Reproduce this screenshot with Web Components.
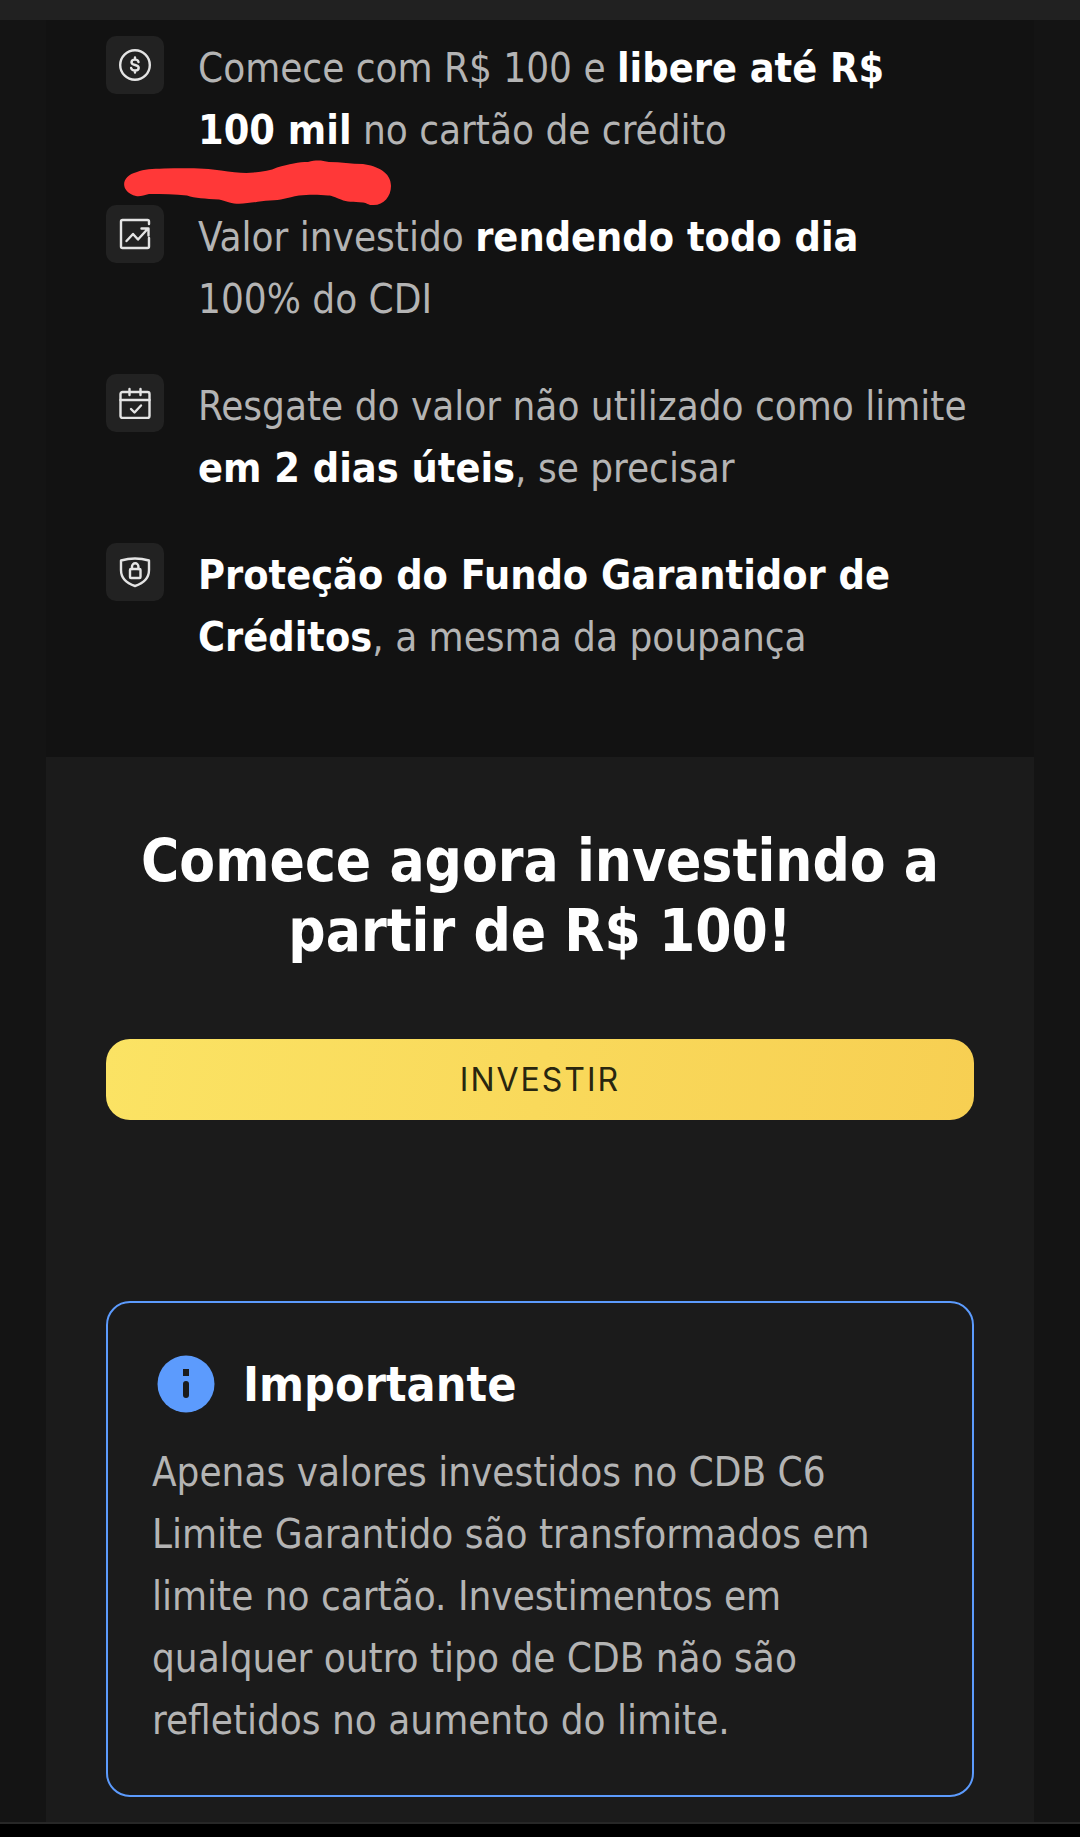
<!DOCTYPE html>
<html lang="pt-BR">
<head>
<meta charset="UTF-8">
<meta name="viewport" content="width=device-width, initial-scale=1">
<title>CDB C6 Limite Garantido</title>
<style>
    :root {
        --page-bg: #141414;
        --section-bg: #121212;
        --panel-bg: #1b1b1b;
        --text: #b4b4b4;
        --strong: #fff;
        --info: #5c9bfd;
    }
    body {
        margin: 0;
        background: #000;
        color: var(--text);
        font-family: "DejaVu Sans Condensed", "DejaVu Sans", sans-serif;
        font-size: 40px;
        line-height: 62px;
    }
    b {
        color: var(--strong);
        font-size: 41px;
        line-height: 1;
    }
</style>
</head>
<body>

<invest-page>
    <benefit-list>
        <benefit-item icon="coin" marked>Comece com R$ 100 e <b>libere até R$ 100&nbsp;mil</b> no cartão de crédito</benefit-item>
        <benefit-item icon="chart">Valor investido <b>rendendo todo dia</b> 100%&nbsp;do CDI</benefit-item>
        <benefit-item icon="calendar">Resgate do valor não utilizado como limite <b>em 2 dias úteis</b>, se precisar</benefit-item>
        <benefit-item icon="shield"><b>Proteção do Fundo Garantidor de Créditos</b>, a mesma da poupança</benefit-item>
    </benefit-list>
    <invest-panel>
        <span slot="title">Comece agora investindo a partir de R$ 100!</span>
        <invest-button>INVESTIR</invest-button>
        <info-callout heading="Importante">Apenas valores investidos no CDB C6 Limite Garantido são transformados em limite no cartão. Investimentos em qualquer outro tipo de CDB não são refletidos no aumento do limite.</info-callout>
    </invest-panel>
</invest-page>

<script>
const ICONS = {
    coin: `
        <circle cx="16" cy="16" r="14.800"/>
        <path d="M19.500 13c-.4-1.600-1.600-2.400-3.500-2.400-2.100 0-3.500 1-3.500 2.600 0 3.800 7.200 1.800 7.200 5.600 0 1.700-1.500 2.700-3.700 2.700-2.100 0-3.500-.9-3.900-2.500M16 8.500v2M16 21.500v2"/>`,
    chart: `
        <path d="M30 6V3.500Q30 2 28.500 2h-25Q2 2 2 3.500v25Q2 30 3.500 30h25q1.500 0 1.500-1.500V20"/>
        <path d="M7.500 23l6.500-7 5 5.500L29 10.500M22.500 10.500H29.500V17.500"/>`,
    calendar: `
        <rect x="1.500" y="5" width="29" height="26" rx="2"/>
        <path d="M1.500 13h29M10.500 2v6M21.500 2v6M12 22l3.500 3.500 6.500-7"/>`,
    shield: `
        <path d="M2 4.500Q16 .500 30 4.500V14q0 11.500-14 16Q2 25.500 2 14z"/>
        <rect x="11" y="13" width="10.500" height="9" rx="1"/>
        <path d="M13 13v-2.500a3.200 3.200 0 0 1 6.400 0v2.500"/>`
};

class InvestPage extends HTMLElement {
    constructor() {
        super();
        this.attachShadow({ mode: 'open' });
    }

    connectedCallback() {
        this.shadowRoot.innerHTML = `
            <style>
                :host {
                    display: block;
                    margin-bottom: 13px;
                    background: var(--page-bg);
                    border-top: 20px solid #212121;
                    border-bottom: 2px solid #272727;
                }
                main {
                    margin: 0 46px;
                }
            </style>
            <main><slot></slot></main>
        `;
    }
}

class BenefitList extends HTMLElement {
    constructor() {
        super();
        this.attachShadow({ mode: 'open' });
    }

    connectedCallback() {
        this.shadowRoot.innerHTML = `
            <style>
                :host {
                    display: block;
                    background: var(--section-bg);
                }
                section {
                    display: flex;
                    flex-direction: column;
                    gap: 44px;
                    padding: 16px 60px 89px;
                }
            </style>
            <section><slot></slot></section>
        `;
    }
}

class BenefitItem extends HTMLElement {
    constructor() {
        super();
        this.attachShadow({ mode: 'open' });
    }

    connectedCallback() {
        const icon = ICONS[this.getAttribute('icon')];
        // hand-drawn highlight under the item
        const mark = this.hasAttribute('marked') ? `
            <svg class="mark" viewBox="0 0 268 46" aria-hidden="true">
                <path d="M13 12C20 9 28 9 40 8.500c22-.500 42-.500 57 2 13 2 24 3 33 2 9-1 17-2 23-5C165 4 175 2 184 2c9-2.500 14-1.500 21 0 12 0 22 2 34 2 14 2 28 8 28 22 0 11-8 20-19 19-4 0-5-2-9-2.500-10-1-16 0-22-3-6-2-9-4-13-4-9-1-20-1-29 0-12 2-18 5-29 5-14 1-24 4-36 3-7-1-9-3-15-4-14-1-24-1-32-4C51 34 39 34 25 34c-5 1-9 3-13 2C-4 32-4 16 13 12z"/>
            </svg>` : '';

        this.shadowRoot.innerHTML = `
            <style>
                :host {
                    position: relative;
                    display: flex;
                    gap: 34px;
                }
                .icon {
                    flex: none;
                    display: grid;
                    place-items: center;
                    width: 58px;
                    height: 58px;
                    border-radius: 10px;
                    background: #222;
                }
                .icon svg {
                    width: 32px;
                    height: 32px;
                    fill: none;
                    stroke: #e4e4e4;
                    stroke-width: 2.4;
                    stroke-linecap: round;
                    stroke-linejoin: round;
                }
                p {
                    flex: 1;
                    margin: 0;
                    padding-top: 1px;
                }
                .mark {
                    position: absolute;
                    left: 18px;
                    top: 124px;
                    width: 268px;
                    height: 46px;
                    fill: #ff3838;
                }
            </style>
            <div class="icon"><svg viewBox="0 0 32 32" aria-hidden="true">${icon}</svg></div>
            <p><slot></slot></p>
            ${mark}
        `;
    }
}

class InvestPanel extends HTMLElement {
    constructor() {
        super();
        this.attachShadow({ mode: 'open' });
    }

    connectedCallback() {
        this.shadowRoot.innerHTML = `
            <style>
                :host {
                    display: block;
                    padding: 69px 60px 25px;
                    background: var(--panel-bg);
                }
                h2 {
                    margin: 0 0 73px;
                    color: var(--strong);
                    font-size: 58px;
                    line-height: 70px;
                    text-align: center;
                }
            </style>
            <h2><slot name="title"></slot></h2>
            <slot></slot>
        `;
    }
}

class InvestButton extends HTMLElement {
    constructor() {
        super();
        this.attachShadow({ mode: 'open' });
    }

    connectedCallback() {
        this.shadowRoot.innerHTML = `
            <style>
                :host {
                    display: block;
                    margin-bottom: 181px;
                }
                button {
                    display: block;
                    width: 100%;
                    height: 81px;
                    padding: 0;
                    border: 0;
                    border-radius: 24px;
                    background: linear-gradient(100deg, #fbe364, #f7cf52);
                    color: #29260f;
                    font-family: Inter, sans-serif;
                    font-size: 32px;
                    letter-spacing: 2px;
                    cursor: pointer;
                }
            </style>
            <button type="button"><slot></slot></button>
        `;
    }
}

class InfoCallout extends HTMLElement {
    constructor() {
        super();
        this.attachShadow({ mode: 'open' });
    }

    connectedCallback() {
        const heading = this.getAttribute('heading');

        this.shadowRoot.innerHTML = `
            <style>
                :host {
                    display: block;
                    padding: 44px 44px 44px;
                    border: 2px solid var(--info);
                    border-radius: 24px;
                }
                header {
                    display: flex;
                    align-items: center;
                    gap: 28px;
                    padding: 8px 5px 28px;
                }
                svg {
                    flex: none;
                    width: 58px;
                    height: 58px;
                }
                h3 {
                    margin: 0;
                    color: var(--strong);
                    font-size: 48px;
                    line-height: 58px;
                }
                p {
                    margin: 0;
                }
            </style>
            <header>
                <svg viewBox="0 0 58 58" aria-hidden="true">
                    <circle cx="29" cy="29" r="28.500" fill="var(--info)"/>
                    <rect x="26" y="14" width="6" height="7" fill="#1b1b1b"/>
                    <rect x="26" y="26" width="6" height="17" rx="3" fill="#1b1b1b"/>
                </svg>
                <h3>${heading}</h3>
            </header>
            <p><slot></slot></p>
        `;
    }
}

customElements.define('invest-page', InvestPage);
customElements.define('benefit-list', BenefitList);
customElements.define('benefit-item', BenefitItem);
customElements.define('invest-panel', InvestPanel);
customElements.define('invest-button', InvestButton);
customElements.define('info-callout', InfoCallout);
</script>
</body>
</html>
